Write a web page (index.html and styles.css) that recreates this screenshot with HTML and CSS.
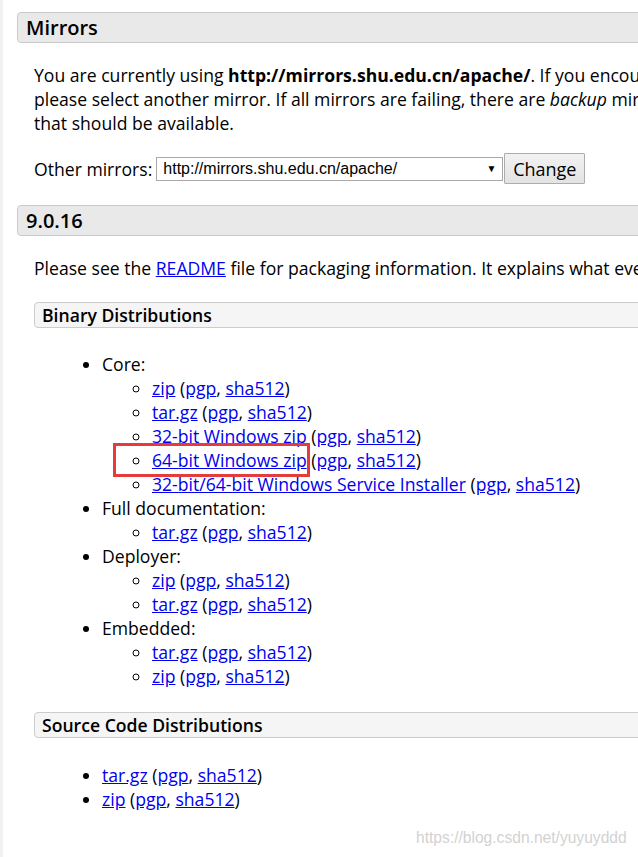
FILE: index.html
```html
<!DOCTYPE html>
<html>
<head>
<meta charset="utf-8">
<link rel="stylesheet" href="styles.css">
</head>
<body>
<div class="page">
  <div class="content">
    <h2 class="section-title">Mirrors</h2>
    <div class="section-body">
      <p class="para">You are currently using <b>http://mirrors.shu.edu.cn/apache/</b>. If you encounter a problem with this mirror,<br>please select another mirror. If all mirrors are failing, there are <i>backup</i> mirrors (at the end of the mirrors list)<br>that should be available.</p>
      <form class="mirror-form">
        <span class="label">Other mirrors:</span>
        <span class="select"><span class="select-text">http://mirrors.shu.edu.cn/apache/</span><span class="arrow">&#9660;</span></span>
        <span class="button">Change</span>
      </form>
    </div>

    <h2 class="section-title version">9.0.16</h2>
    <div class="section-body">
      <p class="para readme">Please see the <a href="#">README</a> file for packaging information. It explains what every distribution contains.</p>

      <h3 class="sub-title">Binary Distributions</h3>
      <ul class="dist">
        <li>Core:
          <ul class="sub">
            <li><a href="#">zip</a> (<a href="#">pgp</a>, <a href="#">sha512</a>)</li>
            <li><a href="#">tar.gz</a> (<a href="#">pgp</a>, <a href="#">sha512</a>)</li>
            <li><a href="#">32-bit Windows zip</a> (<a href="#">pgp</a>, <a href="#">sha512</a>)</li>
            <li><a href="#">64-bit Windows zip</a> (<a href="#">pgp</a>, <a href="#">sha512</a>)</li>
            <li><a href="#">32-bit/64-bit Windows Service Installer</a> (<a href="#">pgp</a>, <a href="#">sha512</a>)</li>
          </ul>
        </li>
        <li>Full documentation:
          <ul class="sub">
            <li><a href="#">tar.gz</a> (<a href="#">pgp</a>, <a href="#">sha512</a>)</li>
          </ul>
        </li>
        <li>Deployer:
          <ul class="sub">
            <li><a href="#">zip</a> (<a href="#">pgp</a>, <a href="#">sha512</a>)</li>
            <li><a href="#">tar.gz</a> (<a href="#">pgp</a>, <a href="#">sha512</a>)</li>
          </ul>
        </li>
        <li>Embedded:
          <ul class="sub">
            <li><a href="#">tar.gz</a> (<a href="#">pgp</a>, <a href="#">sha512</a>)</li>
            <li><a href="#">zip</a> (<a href="#">pgp</a>, <a href="#">sha512</a>)</li>
          </ul>
        </li>
      </ul>

      <h3 class="sub-title source">Source Code Distributions</h3>
      <ul class="dist source-list">
        <li><a href="#">tar.gz</a> (<a href="#">pgp</a>, <a href="#">sha512</a>)</li>
        <li><a href="#">zip</a> (<a href="#">pgp</a>, <a href="#">sha512</a>)</li>
      </ul>
    </div>
  </div>
  <div class="highlight"></div>
  <div class="watermark">https://blog.csdn.net/yuyuyddd</div>
</div>
</body>
</html>
```

FILE: styles.css
```css
html, body {
  margin: 0;
  padding: 0;
  background: #fff;
}

.page {
  position: relative;
  width: 638px;
  height: 857px;
  overflow: hidden;
  box-sizing: border-box;
  border-left: 3px solid #f1f1f1;
  font-family: "Open Sans", "Noto Sans", sans-serif;
  font-size: 17.6px;
  line-height: 24px;
  color: #000;
}

.content {
  width: 1100px;
  padding: 12px 0 0 14px;
}

.section-title {
  margin: 0;
  height: 29px;
  line-height: 29px;
  padding-left: 8px;
  font-size: 20px;
  font-weight: 600;
  background: #e9e9e9;
  border: 1px solid #cbcbcb;
  border-radius: 4px;
}

.section-title.version {
  margin-top: 21px;
}

.section-body {
  padding-left: 17px;
}

.para {
  margin: 20px 0 0 0;
}

.para b {
  font-weight: 700;
}

.readme {
  margin-top: 20px;
}

a {
  color: #0000ee;
  text-decoration: underline;
}

.mirror-form {
  display: flex;
  align-items: center;
  margin: 18px 0 0 0;
  height: 31px;
}

.label {
  margin-right: 4px;
}

.select {
  display: flex;
  align-items: center;
  justify-content: space-between;
  box-sizing: border-box;
  width: 347px;
  height: 24px;
  border: 1px solid #a9a9a9;
  background: #fff;
  padding: 0 6px 0 6px;
  font-family: "Liberation Sans", Arial, sans-serif;
  font-size: 16px;
}

.arrow {
  font-size: 10px;
  color: #000;
}

.button {
  display: flex;
  align-items: center;
  justify-content: center;
  box-sizing: border-box;
  width: 81px;
  height: 31px;
  margin-left: 1px;
  border: 1px solid #adadad;
  background: linear-gradient(#f2f2f2, #e3e3e3);
  font-size: 18px;
  border-radius: 1px;
}

.sub-title {
  margin: 22px 0 0 0;
  height: 24px;
  line-height: 24px;
  padding-left: 7px;
  font-size: 17.6px;
  font-weight: 600;
  background: #f5f5f5;
  border: 1px solid #cccccc;
  border-radius: 4px;
}

.dist {
  margin: 24px 0 0 0;
  padding-left: 68px;
  list-style: disc;
}

.dist.source-list {
  margin-top: 25px;
}

.sub {
  margin: 0;
  padding-left: 50px;
  list-style: circle;
}

.sub-title.source {
  margin-top: 24px;
}

.highlight {
  position: absolute;
  left: 110px;
  top: 443px;
  width: 197px;
  height: 34px;
  box-sizing: border-box;
  border: 3px solid #e63b3b;
}

.watermark {
  position: absolute;
  left: 413px;
  top: 826px;
  font-family: "Liberation Sans", Arial, sans-serif;
  font-size: 15.6px;
  color: #d2d2d2;
}
```
